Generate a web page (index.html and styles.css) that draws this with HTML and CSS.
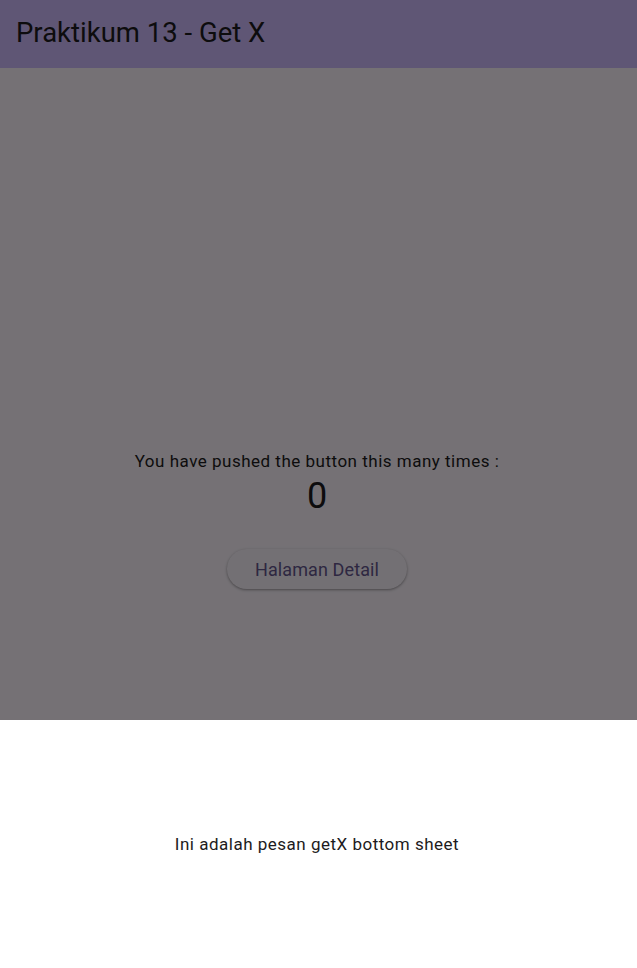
FILE: index.html
```html
<!DOCTYPE html>
<html>
<head>
<meta charset="utf-8">
<link rel="stylesheet" href="styles.css">
</head>
<body>
<div class="app">
  <header class="appbar">
    <h1 class="title">Praktikum 13 - Get X</h1>
  </header>
  <main class="content">
    <p class="label">You have pushed the button this many times :</p>
    <p class="counter">0</p>
    <button class="btn">Halaman Detail</button>
  </main>
  <div class="scrim"></div>
  <div class="sheet">
    <p class="sheet-text">Ini adalah pesan getX bottom sheet</p>
  </div>
</div>
</body>
</html>
```
FILE: styles.css
```css
* { box-sizing: border-box; }
html, body { margin: 0; padding: 0; }
body {
  font-family: Roboto, "Noto Sans", sans-serif;
  background: #fef7ff;
  color: #1d1b20;
}
.app {
  position: relative;
  width: 637px;
  height: 968px;
  display: flex;
  flex-direction: column;
  overflow: hidden;
}
.appbar {
  height: 68px;
  background: #d0bcff;
  display: flex;
  align-items: center;
  padding: 0 16px 2px;
  flex: none;
}
.title {
  margin: 0;
  font-size: 27.5px;
  font-weight: 400;
  line-height: 36px;
  color: #1d1b20;
}
.content {
  flex: 1;
  display: flex;
  flex-direction: column;
  align-items: center;
  justify-content: center;
  padding-right: 3px;
  padding-top: 2px;
}
.label {
  margin: 0;
  font-size: 17px;
  line-height: 24px;
  letter-spacing: 0.5px;
}
.counter {
  margin: 0;
  font-size: 36px;
  line-height: 46px;
}
.btn {
  margin-top: 30px;
  width: 180px;
  height: 40px;
  border: none;
  border-radius: 20px;
  background: #fbf5fd;
  color: #65558f;
  font-family: Roboto, "Noto Sans", sans-serif;
  font-size: 18px;
  font-weight: 400;
  letter-spacing: 0.1px;
  box-shadow: 0 1px 2px rgba(0,0,0,0.25), 0 1px 3px 1px rgba(0,0,0,0.1);
}
.scrim {
  position: absolute;
  inset: 0;
  background: rgba(0,0,0,0.54);
}
.sheet {
  position: absolute;
  left: 0;
  right: 0;
  bottom: 0;
  height: 248px;
  background: #ffffff;
  display: flex;
  align-items: center;
  justify-content: center;
  padding-right: 3px;
}
.sheet-text {
  margin: 0;
  font-size: 17px;
  line-height: 24px;
  letter-spacing: 0.5px;
  color: #1d1b20;
}
```
